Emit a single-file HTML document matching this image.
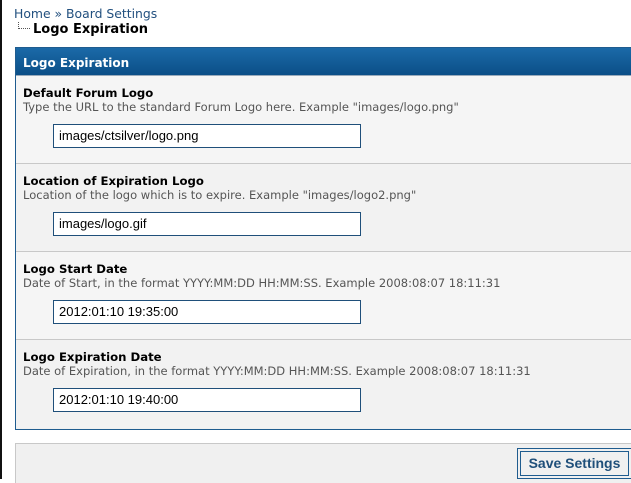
<!DOCTYPE html>
<html><head><meta charset="utf-8"><style>
*{margin:0;padding:0;box-sizing:border-box}
body{width:631px;height:479px;overflow:hidden;background:#fff;position:relative;font-family:"DejaVu Sans",Verdana,sans-serif}
.strip{position:absolute;left:0;top:0;width:2px;height:479px;background:#111;z-index:5}
.bc{position:absolute;left:14px;top:6px;font-size:12.4px;color:#22507f}
.sub{position:absolute;left:18px;top:22px;font-size:13px;font-weight:bold;color:#000}
.sub i{display:inline-block;width:12px;height:7px;border-left:1px dotted #555;border-bottom:1px dotted #555;margin-right:3px;vertical-align:4px}
.panel{position:absolute;left:15px;top:47px;width:630px;height:383px;border:1px solid #1f5c8f;background:#f0f0f0}
.hd{height:28px;background:linear-gradient(#1b6aa8,#0b4f87);color:#fff;font-weight:bold;font-size:12px;padding:8px 0 0 7px;border-bottom:1px solid #9ab}
.row{height:88px;border-bottom:1px solid #c8c8c8;padding:10px 0 0 7px;position:relative}
.row:nth-child(odd){background:#f2f2f2}
.row:nth-child(even){background:#f5f5f5}
.row:last-child{border-bottom:none}
.row b{display:block;font-size:11.7px;color:#000}
.row span{display:block;font-size:11.5px;color:#555;margin-top:0}
.in{position:absolute;left:37px;width:308px;height:24px;border:1px solid #1f4f7a;background:#fff;font-family:"Liberation Sans",Arial,sans-serif;font-size:13px;padding:3px 5px;color:#000}
.ft{position:absolute;left:15px;top:443px;width:630px;height:40px;border-top:1px solid #c8c8c8;border-left:1px solid #c8c8c8;background:#f0f0f0}
.btn{position:absolute;left:517px;top:448px;width:115px;height:31px;border:1px solid #1f5c8f;padding:2px;background:#f0f0f0}
.btn div{border:1px solid #1f5c8f;height:100%;font-family:"Liberation Sans",Arial,sans-serif;font-weight:bold;font-size:14px;color:#1f4f7a;text-align:center;line-height:23px}
</style></head><body>
<div class="strip"></div>
<div class="bc">Home » Board Settings</div>
<div class="sub"><i></i>Logo Expiration</div>
<div class="panel">
<div class="hd">Logo Expiration</div>
<div class="row"><b>Default Forum Logo</b><span>Type the URL to the standard Forum Logo here. Example "images/logo.png"</span><div class="in" style="top:48px">images/ctsilver/logo.png</div></div>
<div class="row"><b>Location of Expiration Logo</b><span>Location of the logo which is to expire. Example "images/logo2.png"</span><div class="in" style="top:48px">images/logo.gif</div></div>
<div class="row"><b>Logo Start Date</b><span>Date of Start, in the format YYYY:MM:DD HH:MM:SS. Example 2008:08:07 18:11:31</span><div class="in" style="top:48px">2012:01:10 19:35:00</div></div>
<div class="row"><b>Logo Expiration Date</b><span>Date of Expiration, in the format YYYY:MM:DD HH:MM:SS. Example 2008:08:07 18:11:31</span><div class="in" style="top:48px">2012:01:10 19:40:00</div></div>
</div>
<div class="ft"></div>
<div class="btn"><div>Save Settings</div></div>
</body></html>
